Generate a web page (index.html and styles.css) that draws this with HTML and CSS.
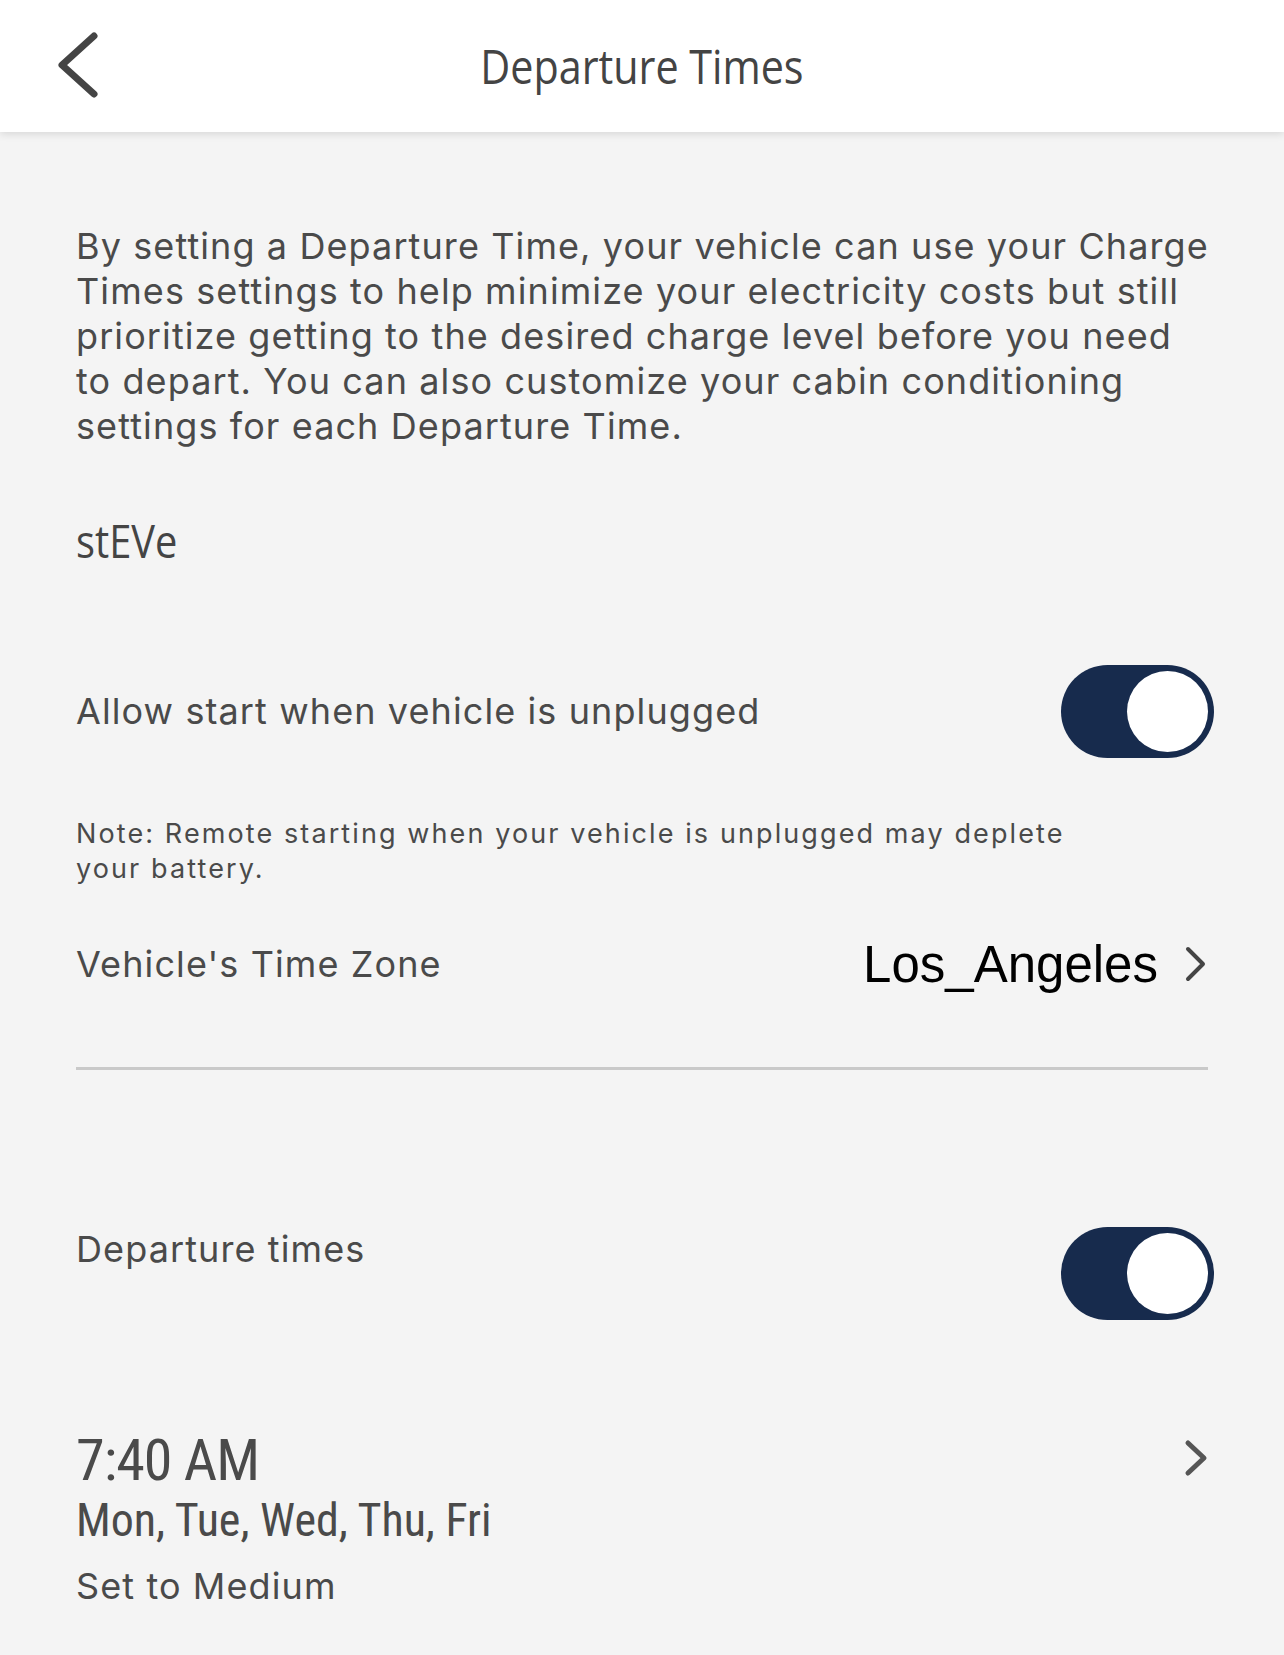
FILE: index.html
```html
<!DOCTYPE html>
<html lang="en">
<head>
<meta charset="utf-8">
<title>Departure Times</title>
<link rel="stylesheet" href="styles.css">
</head>
<body>
<header class="topbar">
  <button class="back" aria-label="Back">
    <svg width="50" height="80" viewBox="0 0 50 80"><polyline points="36,4 4,33 36,62" fill="none" stroke="#444" stroke-width="7" stroke-linecap="round" stroke-linejoin="round"/></svg>
  </button>
  <h1 class="title">Departure Times</h1>
  <div></div>
</header>
<main class="content">
  <p class="intro">By setting a Departure Time, your vehicle can use your Charge Times settings to help minimize your electricity costs but still prioritize getting to the desired charge level before you need to depart. You can also customize your cabin conditioning settings for each Departure Time.</p>
  <h2 class="vehicle">stEVe</h2>
  <div class="row row-center unplug">
    <span class="label">Allow start when vehicle is unplugged</span>
    <span class="toggle"><span class="knob"></span></span>
  </div>
  <p class="note">Note: Remote starting when your vehicle is unplugged may deplete<br>your battery.</p>
  <div class="row row-center tz">
    <span class="label">Vehicle's Time Zone</span>
    <span class="tz-value">Los_Angeles<svg class="chev" width="24" height="36" viewBox="0 0 24 36"><polyline points="4,3 19,18 4,33" fill="none" stroke="#444" stroke-width="4" stroke-linecap="round" stroke-linejoin="round"/></svg></span>
  </div>
  <hr class="divider">
  <div class="row row-top dep">
    <span class="label">Departure times</span>
    <span class="toggle"><span class="knob"></span></span>
  </div>
  <div class="schedule">
    <div class="sched-text">
      <div class="time">7:40 AM</div>
      <div class="days">Mon, Tue, Wed, Thu, Fri</div>
      <div class="level">Set to Medium</div>
    </div>
    <svg class="chev chev2" width="24" height="40" viewBox="0 0 24 40"><polyline points="4,4 20,19 4,34" fill="none" stroke="#555" stroke-width="5" stroke-linecap="round" stroke-linejoin="round"/></svg>
  </div>
</main>
</body>
</html>
```
FILE: styles.css
```css
* { box-sizing: border-box; }
html, body { margin: 0; padding: 0; }
body {
  background: #f4f4f4;
  color: #4a4a4a;
  font-family: "Inter", "Open Sans", sans-serif;
  width: 1284px;
  min-height: 1655px;
}
.topbar {
  height: 132px;
  background: #fff;
  display: grid;
  grid-template-columns: 1fr auto 1fr;
  align-items: center;
  box-shadow: 0 2px 8px rgba(0,0,0,0.12);
  position: relative;
  z-index: 1;
}
.back {
  border: 0;
  background: none;
  padding: 0;
  margin-left: 58px;
  width: 50px;
  height: 80px;
  justify-self: start;
  margin-top: 12px;
}
.back svg { display: block; }
.title {
  margin: 0;
  font-family: "Open Sans", sans-serif;
  font-weight: 400;
  font-size: 48px;
  color: #444;
  line-height: 130px;
  transform: scaleX(0.86);
}
.content { padding: 92px 76px 0 76px; }
.intro {
  margin: 0 -6px 0 0;
  font-size: 36px;
  line-height: 45px;
  letter-spacing: 1.1px;
}
.vehicle {
  margin: 68px 0 0 0;
  font-family: "Open Sans", sans-serif;
  font-weight: 400;
  font-size: 46px;
  line-height: 46px;
  color: #444;
  transform: scaleX(0.865);
  transform-origin: left center;
}
.row { display: flex; justify-content: space-between; }
.row-center { align-items: center; }
.row-top { align-items: flex-start; }
.row .label { font-size: 36px; line-height: 45px; letter-spacing: 1.1px; }
.toggle {
  width: 153px;
  height: 93px;
  border-radius: 47px;
  background: #172b4d;
  display: flex;
  align-items: center;
  justify-content: flex-end;
  padding-right: 6px;
  margin-right: -6px;
}
.knob { width: 81px; height: 81px; border-radius: 50%; background: #fff; }
.unplug { margin-top: 102px; }
.note {
  margin: 58px 0 0 0;
  font-size: 27px;
  line-height: 35px;
  letter-spacing: 2.1px;
}
.tz { margin-top: 43px; height: 70px; }
.tz-value {
  font-family: "Liberation Sans", Arial, sans-serif;
  font-size: 51px;
  color: #000;
  display: flex;
  align-items: center;
  gap: 26px;
}
.divider {
  border: 0;
  height: 3px;
  background: #c9c9c9;
  margin: 68px 0 0 0;
}
.dep { margin-top: 157px; }
.schedule {
  margin-top: 108px;
  display: flex;
  justify-content: space-between;
  align-items: flex-start;
}
.time {
  font-family: "Roboto", sans-serif;
  font-stretch: 75%;
  font-size: 58px;
  line-height: 64px;
  letter-spacing: -1px;
}
.days {
  font-family: "Roboto", sans-serif;
  font-stretch: 75%;
  font-size: 46px;
  line-height: 56px;
}
.level { font-size: 36px; line-height: 76px; letter-spacing: 1.1px; }
.chev2 { margin-top: 11px; }
```
